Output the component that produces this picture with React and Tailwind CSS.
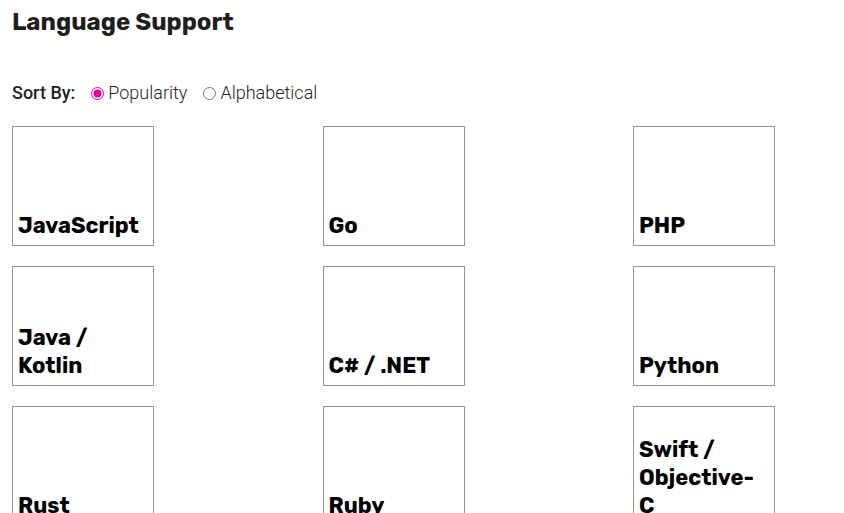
const languages = [
  'JavaScript', 'Go', 'PHP',
  'Java / Kotlin', 'C# / .NET', 'Python',
  'Rust', 'Ruby', 'Swift / Objective-C',
];

function SortOption({ label, value, defaultChecked }) {
  return (
    <label className="flex items-center gap-1">
      <input type="radio" name="sort" value={value} defaultChecked={defaultChecked} className="size-[13px] accent-[#e6009b]" />
      {label}
    </label>
  );
}

export default function App() {
  return (
    <main className="bg-white px-3 pt-1 pb-5 font-[Roboto,sans-serif] text-[#1f1f1f]">
      <h1 className="font-[Rubik,Inter,sans-serif] text-2xl leading-9 font-bold">Language Support</h1>
      <fieldset aria-labelledby="sort-label" className="mt-10 flex h-[26px] items-center gap-4 text-lg font-light">
        <span id="sort-label" className="font-medium">Sort By:</span>
        <SortOption label="Popularity" value="popularity" defaultChecked />
        <SortOption label="Alphabetical" value="alphabetical" />
      </fieldset>
      <ul className="mt-5 mr-[57px] grid grid-cols-[repeat(3,142px)] justify-between gap-y-5">
        {languages.map((name) => (
          <li key={name}>
            <a href="#" className="flex h-[120px] items-end border border-[#949494] pr-2 pb-[5px] pl-[5px] font-[Rubik,Inter,sans-serif] text-[22px] leading-7 font-bold text-black">
              {name}
            </a>
          </li>
        ))}
      </ul>
    </main>
  );
}
